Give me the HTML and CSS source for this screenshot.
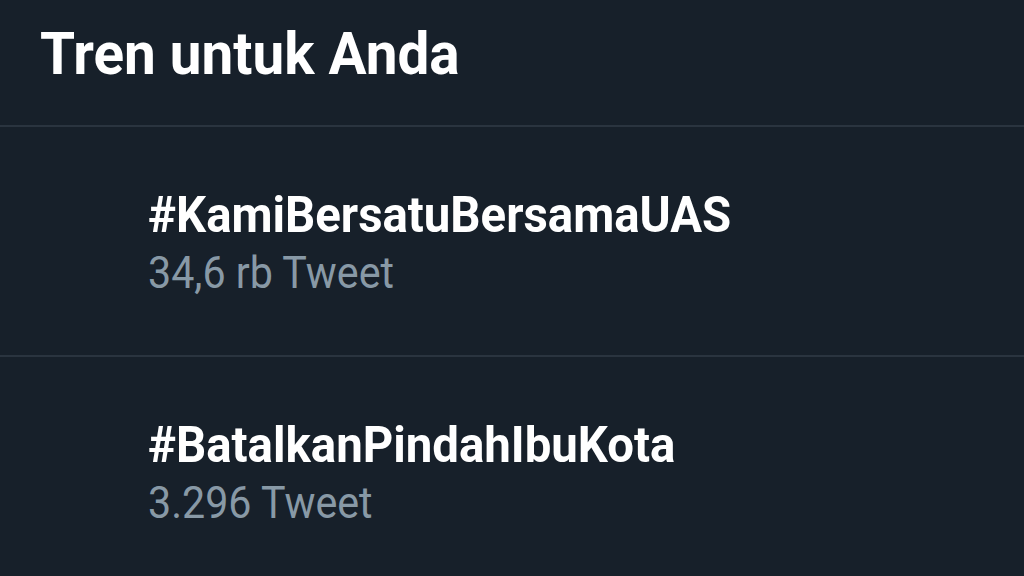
FILE: index.html
```html
<!DOCTYPE html>
<html lang="id">
<head>
<meta charset="utf-8">
<title>Tren untuk Anda</title>
<link rel="stylesheet" href="styles.css">
</head>
<body>
<main class="panel">
  <header class="panel-header">
    <h1 class="panel-title">Tren untuk Anda</h1>
  </header>
  <section class="trend">
    <div class="trend-name">#KamiBersatuBersamaUAS</div>
    <div class="trend-count">34,6 rb Tweet</div>
  </section>
  <section class="trend">
    <div class="trend-name">#BatalkanPindahIbuKota</div>
    <div class="trend-count">3.296 Tweet</div>
  </section>
</main>
</body>
</html>
```
FILE: styles.css
```css
html, body {
  margin: 0;
  padding: 0;
  background: #17202a;
  height: 100%;
  overflow: hidden;
}
.panel {
  font-family: Roboto, "Noto Sans", sans-serif;
  color: #ffffff;
}
.panel-header {
  height: 127px;
  border-bottom: 2px solid #2a343f;
  box-sizing: border-box;
  padding: 18px 0 0 40px;
}
.panel-title {
  margin: 0;
  font-size: 60px;
  font-weight: 700;
  line-height: 72px;
  transform: scaleX(0.944);
  transform-origin: left center;
}
.trend {
  height: 230px;
  border-bottom: 2px solid #2a343f;
  box-sizing: border-box;
  padding: 60px 0 0 148px;
}
.trend-name {
  font-size: 50px;
  font-weight: 700;
  line-height: 56px;
  transform: scaleX(0.947);
  transform-origin: left center;
}
.trend-count {
  margin-top: 3px;
  font-size: 45px;
  line-height: 54px;
  color: #8899a6;
  transform: scaleX(0.916);
  transform-origin: left center;
}
```
